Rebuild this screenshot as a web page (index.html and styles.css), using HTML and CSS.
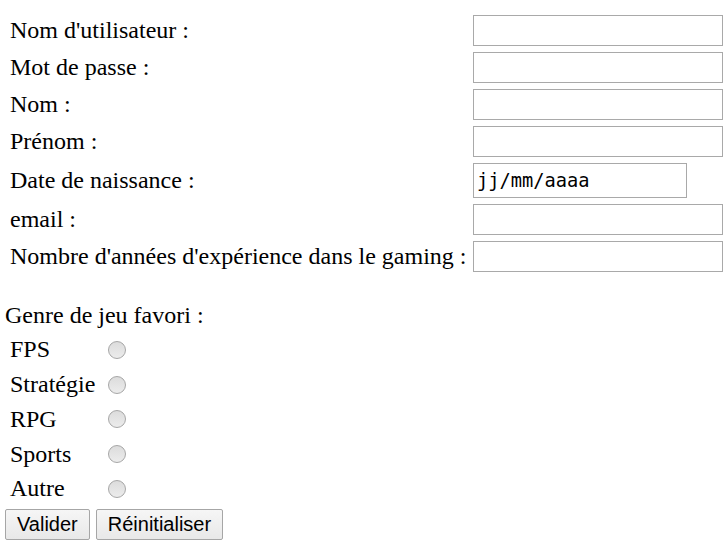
FILE: index.html
```html
<!DOCTYPE html>
<html lang="fr">
<head>
<meta charset="utf-8">
<title>Inscription</title>
<link rel="stylesheet" href="styles.css">
</head>
<body>
<form class="form">
  <div class="fields">
    <label class="lbl" for="u">Nom d'utilisateur :</label>
    <input class="txt" id="u" type="text">
    <label class="lbl" for="p">Mot de passe :</label>
    <input class="txt" id="p" type="password">
    <label class="lbl" for="n">Nom :</label>
    <input class="txt" id="n" type="text">
    <label class="lbl" for="pr">Prénom :</label>
    <input class="txt" id="pr" type="text">
    <label class="lbl" for="d">Date de naissance :</label>
    <div class="date"><span class="date-ph">jj/mm/aaaa</span></div>
    <label class="lbl" for="e">email :</label>
    <input class="txt" id="e" type="text">
    <label class="lbl" for="x">Nombre d'années d'expérience dans le gaming :</label>
    <input class="txt" id="x" type="text">
  </div>
  <div class="genre">Genre de jeu favori :</div>
  <div class="radios">
    <span class="rlbl">FPS</span><span class="radio"></span>
    <span class="rlbl">Stratégie</span><span class="radio"></span>
    <span class="rlbl">RPG</span><span class="radio"></span>
    <span class="rlbl">Sports</span><span class="radio"></span>
    <span class="rlbl">Autre</span><span class="radio"></span>
  </div>
  <div class="buttons">
    <button class="btn" type="button">Valider</button>
    <button class="btn" type="button">Réinitialiser</button>
  </div>
</form>
</body>
</html>
```
FILE: styles.css
```css
html, body {
  margin: 0;
  padding: 0;
  background: #fff;
}
body {
  font-family: "Liberation Serif", "Times New Roman", serif;
  font-size: 24px;
  color: #000;
}
.form {
  padding: 15px 0 0 5px;
}
.fields {
  display: grid;
  grid-template-columns: 454px 250px;
  column-gap: 9px;
  row-gap: 6px;
  align-items: center;
  padding-left: 5px;
}
.lbl {
  line-height: 27px;
  white-space: nowrap;
}
.txt {
  box-sizing: border-box;
  width: 250px;
  height: 31px;
  margin: 0;
  border: 1px solid #a9a9a9;
  background: #fff;
  font: 20px "Liberation Sans", sans-serif;
  padding: 0 3px;
}
.date {
  box-sizing: border-box;
  width: 214px;
  height: 35px;
  border: 1px solid #a9a9a9;
  display: flex;
  align-items: center;
  padding-left: 3px;
}
.date-ph {
  font-family: "DejaVu Sans Mono", monospace;
  font-size: 18.7px;
  color: #000;
}
.genre {
  margin-top: 30px;
  line-height: 27px;
}
.radios {
  display: grid;
  grid-template-columns: 98px 17px;
  grid-auto-rows: 34.75px;
  align-items: center;
  padding-left: 5px;
  margin-top: 3.5px;
}
.rlbl {
  line-height: 27px;
}
.radio {
  width: 18px;
  height: 18px;
  box-sizing: border-box;
  border-radius: 50%;
  border: 1px solid #a6a6a6;
  background: linear-gradient(#dcdcdc, #ececec);
}
.buttons {
  display: flex;
  gap: 6px;
  margin-top: 2.5px;
}
.btn {
  box-sizing: border-box;
  height: 31px;
  margin: 0;
  padding: 0 11px;
  font: 20px "Liberation Sans", Arial, sans-serif;
  color: #000;
  background: linear-gradient(#f6f6f6, #e8e8e8);
  border: 1px solid #a6a6a6;
  border-radius: 2px;
}
```
